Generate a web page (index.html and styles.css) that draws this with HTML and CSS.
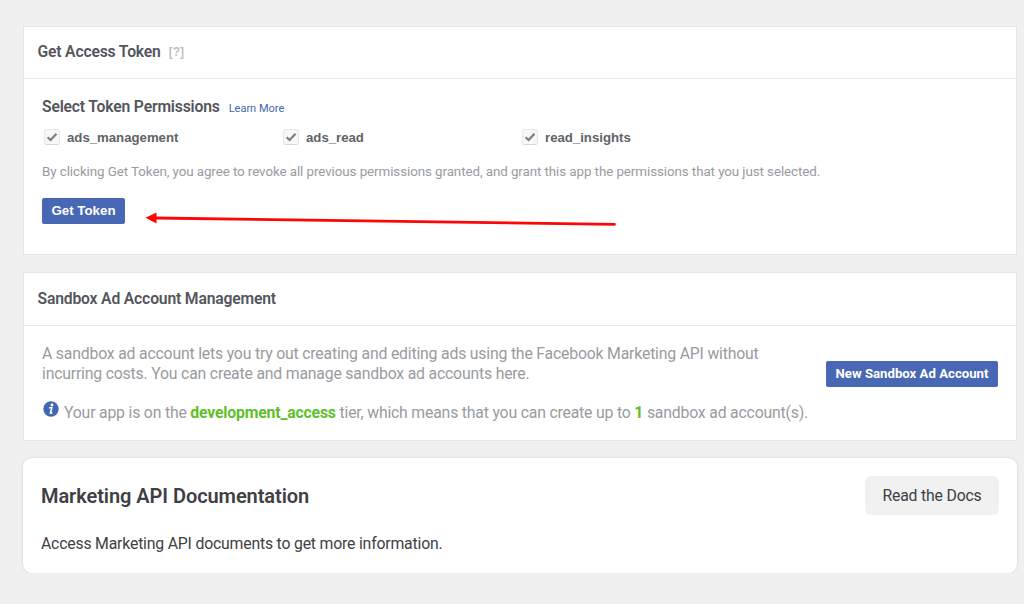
FILE: index.html
```html
<!DOCTYPE html>
<html lang="en">
<head>
    <meta charset="UTF-8">
    <meta name="viewport" content="width=device-width, initial-scale=1.0">
    <title>Marketing API - Tools</title>
    <link rel="stylesheet" href="styles.css">
</head>
<body>
    <svg class="check-symbol" width="0" height="0">
        <symbol id="check" viewBox="0 0 16 16">
            <path d="M3 8.2 L6.4 11.4 L13.2 4.4" fill="none" stroke="#7b7d82" stroke-width="2.5"/>
        </symbol>
    </svg>

    <main class="tools">
        <section class="card token-card">
            <header class="card-header">
                <h2>Get Access Token</h2>
                <span class="help">[?]</span>
            </header>
            <div class="card-body">
                <div class="permissions-title">
                    <h3>Select Token Permissions</h3>
                    <a class="learn-more">Learn More</a>
                </div>
                <div class="permissions">
                    <div class="permission"><span class="checkbox"><svg><use href="#check"/></svg></span><span>ads_management</span></div>
                    <div class="permission"><span class="checkbox"><svg><use href="#check"/></svg></span><span>ads_read</span></div>
                    <div class="permission"><span class="checkbox"><svg><use href="#check"/></svg></span><span>read_insights</span></div>
                </div>
                <p class="notice">By clicking Get Token, you agree to revoke all previous permissions granted, and grant this app the permissions that you just selected.</p>
                <button class="button token-button">Get Token</button>
            </div>
            <svg class="arrow" width="480" height="24" viewBox="0 0 480 24">
                <path d="M10 9 L469.5 15.3" stroke="#fd0606" stroke-width="2.8" stroke-linecap="round"/>
                <path d="M0.5 8.8 L11.5 3.5 L11.5 14.5 Z" fill="#fd0606"/>
            </svg>
        </section>

        <section class="card sandbox-card">
            <header class="card-header">
                <h2>Sandbox Ad Account Management</h2>
            </header>
            <div class="card-body sandbox-body">
                <div class="sandbox-text">
                    <p>A sandbox ad account lets you try out creating and editing ads using the Facebook Marketing API without<br>incurring costs. You can create and manage sandbox ad accounts here.</p>
                    <div class="tier">
                        <svg class="info" viewBox="0 0 16 16">
                            <circle cx="8" cy="8" r="7.7" fill="#4267b2"/>
                            <circle cx="9" cy="4" r="1.4" fill="#fff"/>
                            <path d="M6 6.8 H8.8 L7.5 12 H9.4" fill="none" stroke="#fff" stroke-width="1.6"/>
                        </svg>
                        <p>Your app is on the <b>development_access</b> tier, which means that you can create up to <b>1</b> sandbox ad account(s).</p>
                    </div>
                </div>
                <button class="button sandbox-button">New Sandbox Ad Account</button>
            </div>
        </section>

        <section class="docs-card">
            <div>
                <h1>Marketing API Documentation</h1>
                <p>Access Marketing API documents to get more information.</p>
            </div>
            <button class="docs-button">Read the Docs</button>
        </section>
    </main>
</body>
</html>
```

FILE: styles.css
```css
* {
    margin: 0;
    padding: 0;
    box-sizing: border-box;
}

body {
    font-family: Roboto, "Liberation Sans", sans-serif;
    background: #f0f0f0;
    color: #53565c;
    overflow: hidden;
}

.check-symbol {
    display: block;
}

.tools {
    display: flex;
    flex-direction: column;
    gap: 17px;
    padding: 26px 7px 0 23px;
}

.card {
    position: relative;
    background: #fff;
    border: 1px solid #e4e5e8;
}

.token-card {
    height: 229px;
}

.sandbox-card {
    height: 169px;
}

.card-header {
    display: flex;
    align-items: center;
    height: 52px;
    padding: 0 0 1px 13.5px;
    border-bottom: 1px solid #e9eaed;
}

.sandbox-card .card-header {
    height: 53px;
}

.card-header h2,
.permissions-title h3 {
    font-size: 15.7px;
    line-height: 20px;
    font-weight: 600;
    letter-spacing: -0.17px;
}

.help {
    margin-left: 8px;
    font: bold 12px "Liberation Sans", sans-serif;
    color: #bec0c5;
}

.card-body {
    padding: 18px 18px 0;
}

.permissions-title {
    display: flex;
    align-items: baseline;
    gap: 9px;
}

.learn-more {
    font-size: 11px;
    color: #4267b2;
}

.permissions {
    display: flex;
    margin-top: 10px;
    padding-left: 2px;
}

.permission {
    display: flex;
    align-items: center;
    width: 239px;
    height: 20px;
    gap: 7px;
    font: bold 13.2px "Liberation Sans", sans-serif;
    color: #606368;
}

.checkbox {
    width: 16px;
    height: 16px;
    border: 1px solid #e7e7e8;
    border-bottom-color: #d8d8da;
    border-radius: 3px;
    background: #f7f7f7;
}

.checkbox svg {
    display: block;
    width: 14px;
    height: 14px;
}

.notice {
    margin-top: 15px;
    font-size: 13.4px;
    line-height: 20px;
    letter-spacing: -0.09px;
    color: #999ba1;
}

.button {
    display: block;
    height: 26px;
    padding-bottom: 2px;
    border: 0;
    border-radius: 2px;
    background: #4868b5;
    color: #fff;
    white-space: nowrap;
}

.token-button {
    width: 83px;
    margin-top: 16px;
    font: bold 13.3px "Liberation Sans", sans-serif;
}

/* pointer to the token button */
.arrow {
    position: absolute;
    left: 121px;
    top: 182px;
}

.sandbox-body {
    display: flex;
    justify-content: space-between;
}

.sandbox-text {
    font-size: 15.8px;
    line-height: 20px;
    letter-spacing: -0.19px;
    color: #999ba1;
    white-space: nowrap;
}

.tier {
    display: flex;
    margin-top: 19px;
}

.tier b {
    color: #5fbf2a;
}

.info {
    width: 16px;
    height: 16px;
    margin: -2px 5px 0 1px;
}

.sandbox-button {
    width: 172px;
    margin-top: 17px;
    font: bold 13.2px Roboto, sans-serif;
}

.docs-card {
    display: flex;
    justify-content: space-between;
    height: 115px;
    padding: 18px;
    border-radius: 9px;
    background: #fff;
    box-shadow: 0 0 3px rgba(0, 0, 0, 0.14);
    color: #3f4045;
}

.docs-card h1 {
    font-size: 20px;
    line-height: 40px;
    font-weight: 600;
    letter-spacing: -0.07px;
}

.docs-card p {
    margin-top: 18px;
    font-size: 15.8px;
    line-height: 20px;
    letter-spacing: -0.19px;
}

.docs-button {
    width: 134px;
    height: 39px;
    border: 0;
    border-radius: 6px;
    background: #f1f1f1;
    font: 15.8px Roboto, sans-serif;
    letter-spacing: -0.19px;
    color: #3f4045;
}
```
